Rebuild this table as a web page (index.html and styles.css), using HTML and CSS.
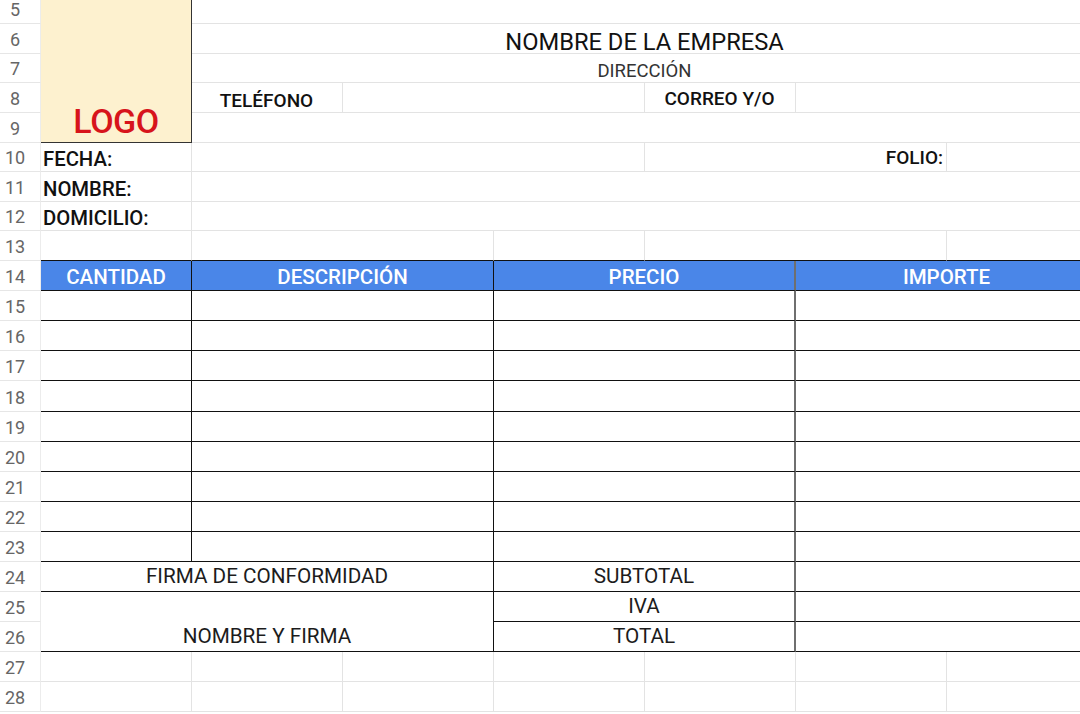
FILE: index.html
```html
<!DOCTYPE html>
<html lang="es">
<head>
<meta charset="utf-8">
<title>Nota de venta</title>
<link rel="stylesheet" href="styles.css">
</head>
<body>
<div class="sheet">
  <!-- row 5 -->
  <div class="rn">5</div>
  <div class="cell logo"><span>LOGO</span></div>
  <div class="cell s6"></div>
  <!-- row 6 -->
  <div class="rn">6</div>
  <div class="cell s6 center title"><span>NOMBRE DE LA EMPRESA</span></div>
  <!-- row 7 -->
  <div class="rn">7</div>
  <div class="cell s6 center addr"><span>DIRECCIÓN</span></div>
  <!-- row 8 -->
  <div class="rn">8</div>
  <div class="cell center lbl sm low"><span>TELÉFONO</span></div>
  <div class="cell s2"></div>
  <div class="cell center lbl sm"><span>CORREO Y/O</span></div>
  <div class="cell s2"></div>
  <!-- row 9 -->
  <div class="rn">9</div>
  <div class="cell s6"></div>
  <!-- row 10 -->
  <div class="rn">10</div>
  <div class="cell lbl"><span>FECHA:</span></div>
  <div class="cell s3"></div>
  <div class="cell s2 right lbl sm"><span>FOLIO:</span></div>
  <div class="cell"></div>
  <!-- row 11 -->
  <div class="rn">11</div>
  <div class="cell lbl"><span>NOMBRE:</span></div>
  <div class="cell s6"></div>
  <!-- row 12 -->
  <div class="rn">12</div>
  <div class="cell lbl"><span>DOMICILIO:</span></div>
  <div class="cell s6"></div>
  <!-- row 13 -->
  <div class="rn">13</div>
  <div class="cell bb"></div>
  <div class="cell s2 bb"></div>
  <div class="cell bb"></div>
  <div class="cell s2 bb"></div>
  <div class="cell bb"></div>
  <!-- row 14 -->
  <div class="rn">14</div>
  <div class="cell t head"><span>CANTIDAD</span></div>
  <div class="cell s2 t head"><span>DESCRIPCIÓN</span></div>
  <div class="cell s2 t head mid"><span>PRECIO</span></div>
  <div class="cell s2 t head"><span>IMPORTE</span></div>
  <!-- rows 15-23 -->
  <div class="rn">15</div><div class="cell t"></div><div class="cell s2 t"></div><div class="cell s2 t mid"></div><div class="cell s2 t"></div>
  <div class="rn">16</div><div class="cell t"></div><div class="cell s2 t"></div><div class="cell s2 t mid"></div><div class="cell s2 t"></div>
  <div class="rn">17</div><div class="cell t"></div><div class="cell s2 t"></div><div class="cell s2 t mid"></div><div class="cell s2 t"></div>
  <div class="rn">18</div><div class="cell t"></div><div class="cell s2 t"></div><div class="cell s2 t mid"></div><div class="cell s2 t"></div>
  <div class="rn">19</div><div class="cell t"></div><div class="cell s2 t"></div><div class="cell s2 t mid"></div><div class="cell s2 t"></div>
  <div class="rn">20</div><div class="cell t"></div><div class="cell s2 t"></div><div class="cell s2 t mid"></div><div class="cell s2 t"></div>
  <div class="rn">21</div><div class="cell t"></div><div class="cell s2 t"></div><div class="cell s2 t mid"></div><div class="cell s2 t"></div>
  <div class="rn">22</div><div class="cell t"></div><div class="cell s2 t"></div><div class="cell s2 t mid"></div><div class="cell s2 t"></div>
  <div class="rn">23</div><div class="cell t"></div><div class="cell s2 t"></div><div class="cell s2 t mid"></div><div class="cell s2 t"></div>
  <!-- row 24 -->
  <div class="rn">24</div>
  <div class="cell s3 t center txt"><span>FIRMA DE CONFORMIDAD</span></div>
  <div class="cell s2 t center txt mid"><span>SUBTOTAL</span></div>
  <div class="cell s2 t"></div>
  <!-- row 25 -->
  <div class="rn">25</div>
  <div class="cell s3 r2 t center txt"><span>NOMBRE Y FIRMA</span></div>
  <div class="cell s2 t center txt mid"><span>IVA</span></div>
  <div class="cell s2 t"></div>
  <!-- row 26 -->
  <div class="rn">26</div>
  <div class="cell s2 t center txt mid"><span>TOTAL</span></div>
  <div class="cell s2 t"></div>
  <!-- row 27 -->
  <div class="rn">27</div>
  <div class="cell"></div><div class="cell"></div><div class="cell"></div><div class="cell"></div><div class="cell"></div><div class="cell"></div><div class="cell"></div>
  <!-- row 28 -->
  <div class="rn">28</div>
  <div class="cell"></div><div class="cell"></div><div class="cell"></div><div class="cell"></div><div class="cell"></div><div class="cell"></div><div class="cell"></div>
</div>
</body>
</html>
```

FILE: styles.css
```css
html, body {
  margin: 0;
  padding: 0;
  background: #fff;
  overflow: hidden;
}
body {
  width: 1080px;
  height: 714px;
  font-family: Roboto, "Liberation Sans", sans-serif;
  color: #1a1a1a;
}
.sheet {
  display: grid;
  grid-template-columns: 41px repeat(7, 151px);
  grid-template-rows: 24.3px repeat(8, 29.6px) repeat(15, 30.1px);
  width: 1098px;
}
.rn {
  grid-column: 1;
  box-sizing: border-box;
  border-bottom: 1px solid #e6e6e6;
  border-right: 1px solid #ececec;
  color: #666;
  font-size: 18px;
  line-height: 1;
  display: flex;
  align-items: flex-end;
  justify-content: center;
  padding: 0 10px 4px 0;
}
.cell {
  box-sizing: border-box;
  border-right: 1px solid #e3e3e3;
  border-bottom: 1px solid #e3e3e3;
  display: flex;
  align-items: flex-end;
  padding: 0 3px 2px;
  white-space: nowrap;
  line-height: 1.15;
  min-width: 0;
}
.s2 { grid-column: span 2; }
.s3 { grid-column: span 3; }
.s6 { grid-column: span 6; }
.r2 { grid-row: span 2; }
.center { justify-content: center; }
.right { justify-content: flex-end; }

.logo {
  grid-row: span 5;
  background: #fdf1cf;
  border-right: 1px solid #333;
  border-bottom: 1px solid #333;
  justify-content: center;
  padding-bottom: 1px;
}
.logo span {
  color: #d7141b;
  font-weight: 500;
  font-size: 34px;
  letter-spacing: -0.5px;
}
.title span {
  font-size: 23.7px;
  line-height: 0.8;
  color: #111;
}
.title { padding-bottom: 1px; }
.addr span {
  font-size: 18.5px;
  line-height: 1;
  color: #333;
}
.addr { padding-bottom: 2px; }
.lbl span {
  font-size: 20.3px;
  line-height: 1;
  font-weight: 500;
  color: #111;
}
.lbl { padding-left: 2px; padding-bottom: 2px; }
.lbl.sm span { font-size: 19px; }
.lbl.sm { padding-bottom: 4px; }
.lbl.low { padding-bottom: 2px; }

.bb { border-bottom: 1px solid #111; }
.t {
  border-right: 1px solid #111;
  border-bottom: 1px solid #111;
}
.t.mid { border-right: 2px solid #6f6f6f; }
.head {
  background: #4a86e8;
  justify-content: center;
  padding-bottom: 3px;
}
.head span {
  color: #fff;
  font-weight: 500;
  font-size: 20.5px;
  line-height: 1;
}
.txt span {
  font-size: 20.7px;
  color: #1c1c1c;
}
```
